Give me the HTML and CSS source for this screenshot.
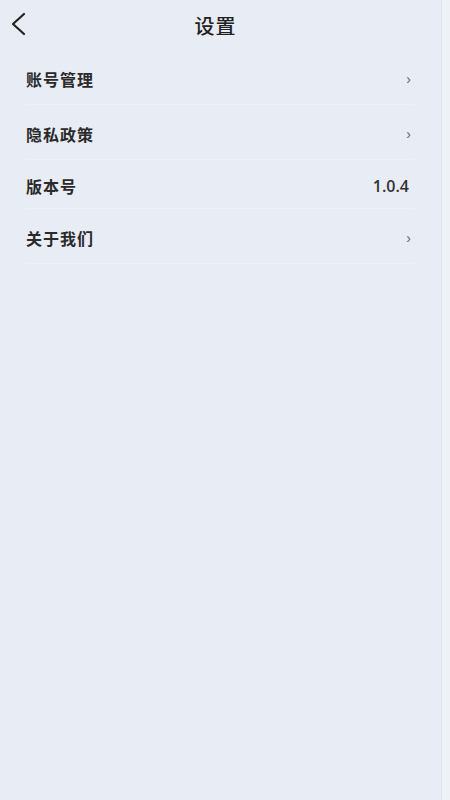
FILE: index.html
```html
<!DOCTYPE html>
<html lang="zh-CN">

<head>
  <meta charset="UTF-8" />
  <meta name="viewport" content="width=device-width, initial-scale=1.0" />
  <title>设置</title>
  <link rel="stylesheet" href="styles.css">
</head>

<body>
  <div class="page">
    <div class="nav-bar">
      <span class="back">
        <svg width="18" height="24" viewBox="0 0 18 24">
          <path d="M15 2 L4 12 L15 22" fill="none" stroke="#222" stroke-width="2.2" stroke-linecap="round" stroke-linejoin="round" />
        </svg>
      </span>
      <h1>设置</h1>
    </div>

    <ul class="menu">
      <li class="menu-item">
        <span class="label">账号管理</span>
        <span class="arrow">&rsaquo;</span>
      </li>
      <li class="menu-item">
        <span class="label">隐私政策</span>
        <span class="arrow">&rsaquo;</span>
      </li>
      <li class="menu-item short">
        <span class="label">版本号</span>
        <span class="value">1.0.4</span>
      </li>
      <li class="menu-item">
        <span class="label">关于我们</span>
        <span class="arrow">&rsaquo;</span>
      </li>
    </ul>
  </div>
  <div class="edge"></div>
</body>

</html>
```

FILE: styles.css
```css
* {
  box-sizing: border-box;
}

html,
body {
  height: 100%;
}

body {
  margin: 0;
  display: flex;
  font-family: "Noto Sans CJK SC", "Noto Sans", sans-serif;
  background: #e8ecf4;
  color: #222;
}

.page {
  flex: 1;
  min-width: 0;
}

.edge {
  width: 9px;
  border-left: 1px solid #e2e6ee;
  background: #eef1f6;
}

.nav-bar {
  position: relative;
  height: 50px;
  display: flex;
  align-items: center;
  justify-content: center;
}

.back {
  position: absolute;
  left: 9px;
  top: 12px;
  display: flex;
}

h1 {
  margin: 0;
  font-size: 20px;
  font-weight: 500;
  letter-spacing: 1px;
  margin-left: -10px;
}

.menu {
  list-style: none;
  margin: 0;
  padding: 0 27px 0 26px;
}

.menu-item {
  height: 55px;
  padding-top: 4px;
  display: flex;
  align-items: center;
  justify-content: space-between;
  border-bottom: 1px solid #eef1f7;
}

.menu-item.short {
  height: 49px;
}

.label {
  font-size: 16px;
  font-weight: 700;
  letter-spacing: 1px;
  color: #2a2a2a;
}

.arrow {
  font-family: "Liberation Sans", sans-serif;
  font-size: 14px;
  color: #666;
  margin-right: 3px;
}

.value {
  font-family: "Open Sans", sans-serif;
  font-size: 16px;
  font-weight: 600;
  color: #333;
  margin-right: 5px;
}
```
